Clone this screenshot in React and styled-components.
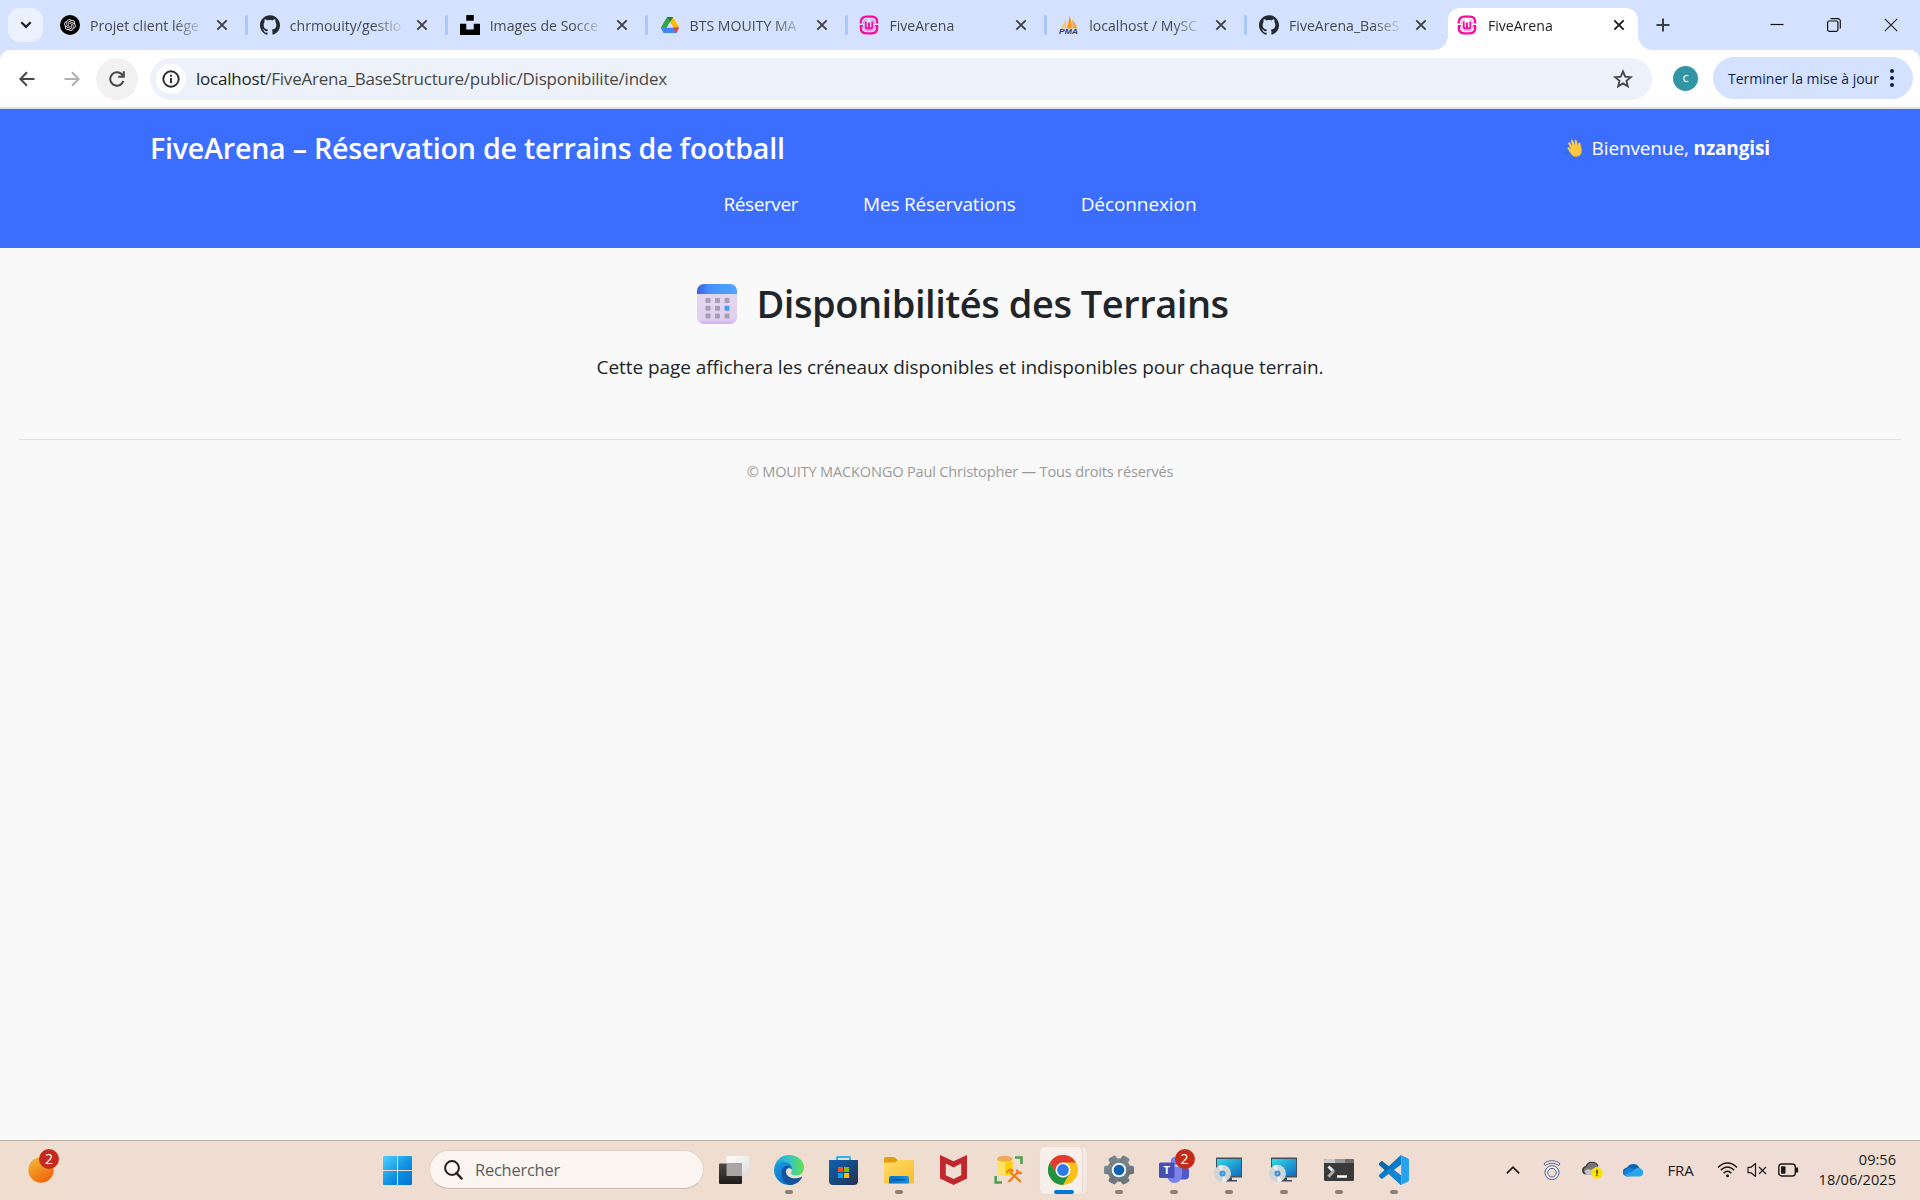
import React from 'react';
import styled, { createGlobalStyle } from 'styled-components';
import { SiGithub, SiUnsplash } from 'react-icons/si';
import { RiOpenaiFill } from 'react-icons/ri';

const GlobalStyle = createGlobalStyle`
  * { box-sizing: border-box; }
  body { margin: 0; font-family: "Open Sans", "Noto Sans", sans-serif; }
  svg { display: block; flex: none; }
`;

const Screen = styled.div`
  width: 1920px;
  height: 1200px;
  display: flex;
  flex-direction: column;
  overflow: hidden;
  background: #f9f9f9;
`;

/* ---------- browser tabs ---------- */
const TabStrip = styled.div`
  height: 50px;
  flex: none;
  display: flex;
  background: #d5e2ff;
`;
const TabSearch = styled.div`
  width: 35px;
  height: 34px;
  margin: 8px 4px 0 8px;
  border-radius: 12px;
  background: #ebf1ff;
  display: flex;
  align-items: center;
  justify-content: center;
`;
const Tab = styled.div`
  position: relative;
  flex: none;
  width: ${p => (p.$active ? 190 : 199.85)}px;
  height: ${p => (p.$active ? 42 : 50)}px;
  margin: ${p => (p.$active ? '8px 0 0 2px' : '0')};
  padding: ${p => (p.$active ? '0 0 8px 9px' : '0 0 0 13px')};
  border-radius: 12px 12px 0 0;
  background: ${p => (p.$active ? '#fff' : 'transparent')};
  display: flex;
  align-items: center;
  &::before, &::after {
    content: ${p => (p.$active ? '""' : 'none')};
    position: absolute;
    bottom: 0;
    width: 14px;
    height: 14px;
  }
  &::before { left: -14px; background: radial-gradient(circle at 0 0, transparent 13.5px, #fff 14px); }
  &::after { right: -14px; background: radial-gradient(circle at 100% 0, transparent 13.5px, #fff 14px); }
`;
const TabTitle = styled.span`
  flex: none;
  width: ${p => (p.$active ? 111 : 112)}px;
  margin: 1px 10px 0 ${p => (p.$active ? 11 : 10)}px;
  font-size: 14.1px;
  line-height: 22px;
  color: ${p => (p.$active ? '#1f1f1f' : '#46484d')};
  white-space: nowrap;
  mask-image: linear-gradient(90deg, #000 84px, transparent 115px);
`;
const TabClose = styled.span`
  width: 20px;
  flex: none;
  display: flex;
  justify-content: center;
`;
const Separator = styled.i`
  flex: none;
  width: 3px;
  height: 20px;
  margin: 0 -3px 0 13px;
  border-radius: 2px;
  background: #a8c7fa;
`;
const NewTab = styled.div`
  width: 51px;
  display: flex;
  align-items: center;
  justify-content: center;
`;
const WindowButtons = styled.div`
  margin-left: auto;
  display: flex;
  align-items: center;
  gap: 43px;
  padding-right: 22px;
`;

/* ---------- browser toolbar ---------- */
const ToolbarBack = styled.div`
  flex: none;
  background: #d5e2ff;
`;
const Toolbar = styled.div`
  height: 57px;
  padding: 0 7px 0 6px;
  border-radius: 10px 10px 0 0;
  background: #fff;
  display: flex;
  align-items: center;
`;
const NavButton = styled.span`
  width: 42px;
  height: 42px;
  margin-right: 3px;
  border-radius: 50%;
  background: ${p => (p.$hover ? '#f1f1f1' : 'transparent')};
  display: flex;
  align-items: center;
  justify-content: center;
`;
const AddressBar = styled.div`
  width: 1502px;
  height: 42px;
  margin-left: 9px;
  padding: 0 19px 0 6px;
  border-radius: 21px;
  background: #edf1fa;
  display: flex;
  align-items: center;
`;
const SiteInfo = styled.span`
  width: 30px;
  height: 30px;
  border-radius: 50%;
  background: #fff;
  display: flex;
  align-items: center;
  justify-content: center;
`;
const Url = styled.span`
  margin: 1px auto 0 10px;
  font-size: 17px;
  line-height: 24px;
  letter-spacing: -0.22px;
  color: #474747;
  b { font-weight: 400; color: #1f1f1f; }
`;
const Avatar = styled.span`
  width: 25px;
  height: 25px;
  margin-left: 21px;
  border-radius: 50%;
  background: #3295a6;
  color: #fff;
  font-size: 13px;
  line-height: 23px;
  text-align: center;
`;
const UpdateChip = styled.div`
  width: 200px;
  height: 42px;
  margin: 0 0 1px 15px;
  padding: 0 19px 0 15px;
  border-radius: 21px;
  background: #d5e2ff;
  color: #0b1d4e;
  font-size: 14px;
  white-space: nowrap;
  display: flex;
  align-items: center;
  justify-content: space-between;
`;
const ToolbarEdge = styled.div`
  height: 2px;
  flex: none;
  background: #dfe1e4;
`;

/* ---------- site ---------- */
const Header = styled.header`
  height: 139px;
  flex: none;
  padding: 19px 150px 0;
  background: #3b6dff;
  color: #fff;
`;
const HeaderRow = styled.div`
  height: 40px;
  display: flex;
  align-items: center;
  justify-content: space-between;
  white-space: nowrap;
`;
const SiteTitle = styled.h1`
  margin: 0;
  font-size: 28.6px;
  line-height: 40px;
  font-weight: 600;
  letter-spacing: -0.22px;
`;
const Welcome = styled.div`
  display: flex;
  align-items: center;
  gap: 9px;
  font-size: 19px;
  line-height: 30px;
  letter-spacing: -0.13px;
`;
const SiteNav = styled.nav`
  margin-top: 21px;
  display: flex;
  justify-content: center;
  gap: 65px;
`;
const NavLink = styled.span`
  font-size: 19px;
  line-height: 30px;
  letter-spacing: ${p => p.$spacing}px;
`;
const Main = styled.main`
  flex: 1;
  padding: 31px 19px 0;
  display: flex;
  flex-direction: column;
`;
const PageTitle = styled.h2`
  margin: 0;
  padding-left: 6px;
  display: flex;
  justify-content: center;
  align-items: center;
  gap: 19px;
  font-size: 38px;
  line-height: 48px;
  font-weight: 600;
  letter-spacing: -0.46px;
  color: #212529;
  svg { margin-top: 2px; }
`;
const Lead = styled.p`
  margin: 25px 0 57px;
  text-align: center;
  font-size: 19px;
  line-height: 30px;
  letter-spacing: -0.07px;
  color: #212529;
`;
const Footer = styled.footer`
  border-top: 1px solid #dee0e2;
  padding-top: 19px;
  text-align: center;
  font-size: 14.6px;
  line-height: 24px;
  letter-spacing: -0.19px;
  color: #999;
`;

/* ---------- taskbar ---------- */
const Taskbar = styled.div`
  height: 60px;
  flex: none;
  border-top: 1px solid #bfafa6;
  background: linear-gradient(90deg, #efddd0, #efddd4 15%, #efddd0 35%, #f0ddd2 70%, #efdcd5 90%, #efddd3);
  display: flex;
  align-items: center;
`;
const Badged = styled.div`
  position: relative;
  width: ${p => p.$w || 30}px;
  height: 30px;
  display: flex;
  align-items: center;
  justify-content: center;
`;
const Badge = styled.span`
  position: absolute;
  top: -6px;
  right: -6px;
  width: 20px;
  height: 20px;
  border-radius: 50%;
  background: #c42b1c;
  color: #fff;
  font-size: 14px;
  line-height: 20px;
  text-align: center;
`;
const Widgets = styled.div`
  width: 383px;
  padding: 0 0 1px 28px;
  & ${Badge} { right: -5px; }
`;
const SearchBox = styled.div`
  width: 275px;
  height: 39px;
  margin: 0 0 2px 17px;
  padding-left: 14px;
  border: 1px solid #e3d2c8;
  border-bottom-color: #c9b8ae;
  border-radius: 20px;
  background: #faf5f1;
  color: #5f5c5a;
  font-size: 16.4px;
  letter-spacing: -0.2px;
  display: flex;
  align-items: center;
  gap: 12px;
`;
const Apps = styled.div`
  display: flex;
  margin-left: 2px;
`;
const AppSlot = styled.div`
  position: relative;
  width: 55px;
  height: 59px;
  padding-bottom: 1px;
  display: flex;
  align-items: center;
  justify-content: center;
  &::after {
    content: ${p => (p.$state ? '""' : 'none')};
    position: absolute;
    bottom: 6px;
    left: 50%;
    width: ${p => (p.$state === 'active' ? 20 : 8)}px;
    height: 4px;
    transform: translateX(-50%);
    border-radius: 2px;
    background: ${p => (p.$state === 'active' ? '#0078d7' : '#8b7f78')};
  }
`;
const ActivePlate = styled.div`
  width: 49px;
  height: 49px;
  border: 1px solid #e8dad1;
  border-radius: 6px;
  background: #f8efea;
  box-shadow: inset -5px 0 0 -1px #f4e8e1, inset -6px 0 0 -1px #e6d8cf;
  display: flex;
  align-items: center;
  padding-left: 8px;
`;
const Tray = styled.div`
  margin-left: auto;
  padding: 0 24px 2px 0;
  display: flex;
  align-items: center;
  color: #1b1a19;
`;
const TrayItem = styled.span`
  width: ${p => p.$w}px;
  display: flex;
  justify-content: center;
  font-size: 15px;
  letter-spacing: -0.2px;
`;
const Clock = styled.div`
  width: 87px;
  margin-bottom: 2px;
  text-align: right;
  font-size: 14.6px;
  line-height: 20px;
`;

/* ---------- icons ---------- */
const Cross = ({ color = '#3c3f44' }) => (
  <svg width="12" height="12" viewBox="0 0 12 12" stroke={color} strokeWidth="1.9" fill="none"><path d="M1.3 1.3l9.4 9.4M10.7 1.3l-9.4 9.4" /></svg>
);
const OpenAi = () => (
  <svg width="20" height="20" viewBox="0 0 20 20"><circle cx="10" cy="10" r="10" /><RiOpenaiFill x="3" y="3" size="14" color="#fff" /></svg>
);
const Drive = () => (
  <svg width="20" height="20" viewBox="0 0 20 20">
    <path d="M7 2h6L6.300 13.800 4 17.500.9 12.600z" fill="#34a350" />
    <path d="M7 2h6l6.200 10.600h-6z" fill="#fbbc04" />
    <path d="M7 2h6l-3 5.200z" fill="#188038" />
    <path d="M6.600 12.600h12.500L16.500 18h-13L.9 12.600z" fill="#4285f4" />
    <path d="M13.300 12.600h5.800L16 18z" fill="#ea4335" />
    <path d="M10 7.200l3.200 5.400H6.800z" fill="#d5e2ff" />
  </svg>
);
const Wamp = () => (
  <svg width="20" height="20" viewBox="0 0 20 20" fill="none" stroke="#f70a9f">
    <path d="M1.800 8.600V7.200C1.800 3.800 4 1.700 7.200 1.700h5.600c3.200 0 5.400 2.100 5.400 5.500v1.400M1.800 10.800v2c0 3.400 2.200 5.500 5.400 5.500h5.600c3.200 0 5.400-2.100 5.400-5.500v-2" strokeWidth="2.300" />
    <path d="M1 10.700h3M16 10.700h3" strokeWidth="1.600" />
    <path d="M4.500 8.800c0-2.800 1-4.200 3.400-4.300M15.500 8.800c0-2.800-1-4.200-3.400-4.300M4.500 11c0 3 1.200 4.500 4 4.500h3c2.800 0 4-1.500 4-4.500" strokeWidth=".8" opacity=".55" />
    <path d="M6.700 6.600v5c0 2.600 3.300 2.600 3.300 0V7.600M10 11.600c0 2.600 3.300 2.600 3.300 0v-5" strokeWidth="1.900" />
  </svg>
);
const PmaText = styled.text`
  font: italic 700 7.500px "Liberation Sans", sans-serif;
  fill: #33386b;
`;
const Pma = () => (
  <svg width="20" height="20" viewBox="0 0 20 20">
    <path d="M1.500 13.500C4 10 6 6 6.500 3.500c1 3 1 6.500.5 10z" fill="#fbc575" />
    <path d="M7.500 13.500C9 9.500 10 5 10.500.5c1.500 4 2.500 9 2 13z" fill="#f8981d" />
    <path d="M13.300 13.500c.5-3.500.2-6-.3-9 2.500 2.500 4.500 6 5.300 9z" fill="#f7a63c" />
    <PmaText x="0" y="19.400" textLength="19" lengthAdjust="spacingAndGlyphs">PMA</PmaText>
  </svg>
);
const Wave = () => (
  <svg width="19" height="22" viewBox="0 0 19 22">
    <g transform="rotate(-14 10 12)">
      <path d="M4 10.500C3.500 9 5 8.300 5.700 9.500L7 12 5.800 5.500C5.500 4 7.300 3.600 7.800 5l1.300 4.300L9 3.700c0-1.500 2-1.600 2.200-.1l.7 5.300.8-4.500c.3-1.400 2-1.200 2 .3l-.1 5.600 1-2.500c.5-1.200 2-.8 1.900.5-.3 3.500.2 5.200-.8 8.200-.8 2.500-3 4-5.600 3.600-3-.4-4.500-2.200-5.400-4.600z" fill="#ffc83d" />
      <path d="M7.500 8l1.500 5h6V9l-1 1-2-1.500-1 1-2-.5z" fill="#ffc83d" />
      <path d="M6 16.500c1.500 3 5 3.700 8.300 2.300-2 2.200-6.800 1.700-8.300-2.300z" fill="#f59b2b" />
    </g>
    <path d="M2.500 13.500c.2 2 .8 3.200 2 4.300M.7 15c.2 1.500.9 2.600 1.800 3.500M13 1.500c1.500.2 2.200 1 2.700 2" stroke="#1c76c4" strokeWidth=".9" fill="none" />
  </svg>
);
const Calendar = () => (
  <svg width="40" height="40" viewBox="0 0 40 40">
    <defs>
      <linearGradient id="calTop"><stop offset="0" stopColor="#3a5fe0" /><stop offset=".3" stopColor="#4690fa" /><stop offset="1" stopColor="#52a6ff" /></linearGradient>
      <linearGradient id="calBody" x2="0" y2="1"><stop offset=".5" stopColor="#e2d5ee" /><stop offset=".88" stopColor="#e0d0f0" /><stop offset="1" stopColor="#cfa9f5" /></linearGradient>
    </defs>
    <rect width="40" height="40" rx="7" fill="url(#calBody)" />
    <path d="M0 10V7a7 7 0 017-7h26a7 7 0 017 7v3z" fill="url(#calTop)" />
    {[14, 21.700, 29.400].map(y => [8.500, 18, 27.500].map(x => (
      <rect key={x + '-' + y} x={x} y={y} width="5" height="5" rx="1" fill={x > 27 && y > 21 && y < 22 ? '#4a9cf8' : '#a79db5'} />
    )))}
  </svg>
);
const WindowsLogo = () => (
  <svg width="29" height="29" viewBox="0 0 29 29">
    <defs><linearGradient id="win" x2="1" y2="1"><stop offset="0" stopColor="#4fd2ff" /><stop offset=".55" stopColor="#0f90e2" /><stop offset="1" stopColor="#0073d2" /></linearGradient></defs>
    <path d="M1 0h13v14H0V1a1 1 0 011-1zM15 0h13a1 1 0 011 1v13H15zM0 15h14v14H1a1 1 0 01-1-1zM15 15h14v13a1 1 0 01-1 1H15z" fill="url(#win)" />
  </svg>
);
const Weather = () => (
  <svg width="26" height="26" viewBox="0 0 26 26">
    <defs><linearGradient id="sun" x1=".2" y1=".1" x2=".7" y2=".9"><stop offset="0" stopColor="#f0b135" /><stop offset="1" stopColor="#f2690d" /></linearGradient></defs>
    <circle cx="13" cy="13" r="12.700" fill="url(#sun)" />
  </svg>
);
const TaskView = () => (
  <svg width="30" height="28" viewBox="0 0 30 28">
    <defs>
      <linearGradient id="tvd" x2="0" y2="1"><stop offset="0" stopColor="#4b4a48" /><stop offset="1" stopColor="#1d1c1b" /></linearGradient>
      <linearGradient id="tvl" x2="1" y2="1"><stop offset="0" stopColor="#fff" /><stop offset="1" stopColor="#dedddc" /></linearGradient>
    </defs>
    <rect x="7.500" y="0" width="22.500" height="20" rx="1" fill="url(#tvl)" />
    <rect y="7.500" width="23" height="20.500" rx="1" fill="url(#tvd)" />
    <path d="M7.500 7.500H23V20H7.500z" fill="#a9a7a5" />
  </svg>
);
const Edge = () => (
  <svg width="30" height="30" viewBox="0 0 30 30">
    <defs>
      <linearGradient id="ed1"><stop offset="0" stopColor="#1ea0dd" /><stop offset=".45" stopColor="#32c2cf" /><stop offset="1" stopColor="#66e04b" /></linearGradient>
      <linearGradient id="ed2" x2=".5" y2="1"><stop offset="0" stopColor="#1b9de0" /><stop offset="1" stopColor="#0a6fd0" /></linearGradient>
    </defs>
    <path d="M.5 12C2 4.500 8 0 15 0c8.500 0 15 5.500 15 12.500 0 5-3.500 8-8 8-3 0-5-1-5-2.200 0-1 1-1.500 1-3.300 0-3-3-5.500-7-5.500-5 0-8.500 1.500-10.500 2.500z" fill="url(#ed1)" />
    <path d="M0 15C0 9.500 5 7 10 7c5.500 0 8.500 3.500 8 8-2-3-6.500-2-6.500 2.500 0 5 3.500 9.500 8.500 11.500A15 15 0 010 15z" fill="url(#ed2)" />
    <path d="M8 14.500C9.500 11 14 9.500 17 12.300c-3-.8-5 1.700-5 4.200 0 4.500 4.500 7 9 6.800 3 0 5-.8 6-1.300 1-.4 1.300.2.8 1C25 27.500 20.500 30 15.500 30 9.500 28 6 20 8 14.500z" fill="#12549f" />
  </svg>
);
const Store = () => (
  <svg width="29" height="29" viewBox="0 0 29 29">
    <defs><linearGradient id="st" x2="1" y2="1"><stop offset="0" stopColor="#0a64b4" /><stop offset="1" stopColor="#252f50" /></linearGradient></defs>
    <path d="M8 5V1.500Q8 1 8.500 1h12q.5 0 .5.500V5" fill="none" stroke="#29b5f2" strokeWidth="2" />
    <path d="M0 4h29v21a4 4 0 01-4 4H4a4 4 0 01-4-4z" fill="url(#st)" />
    <path d="M9 11h5v5H9z" fill="#f25022" /><path d="M15 11h5v5h-5z" fill="#7fba00" />
    <path d="M9 17h5v5H9z" fill="#00a4ef" /><path d="M15 17h5v5h-5z" fill="#ffb900" />
  </svg>
);
const Folder = () => (
  <svg width="30" height="27" viewBox="0 0 30 27">
    <defs>
      <linearGradient id="fo" x2="1" y2="1"><stop offset="0" stopColor="#ffdb6c" /><stop offset="1" stopColor="#fdbd27" /></linearGradient>
      <linearGradient id="fb"><stop offset="0" stopColor="#0a6fc4" /><stop offset="1" stopColor="#1a90dd" /></linearGradient>
    </defs>
    <path d="M0 1.500Q0 0 1.500 0h8q1 0 2 1l2 2H29q1 0 1 1v5H0z" fill="#dfa00d" />
    <path d="M0 5.500h11L14 3h15q1 0 1 1v21.500q0 1-1 1H1q-1 0-1-1z" fill="url(#fo)" />
    <path d="M5 26.500V21q0-2 2-2h16q2 0 2 2v5.500z" fill="url(#fb)" />
    <path d="M8.500 22.800h13" stroke="#0b4a8a" strokeWidth="1.200" />
  </svg>
);
const McAfee = () => (
  <svg width="27" height="30" viewBox="0 0 27 30"><path d="M0 0l13.500 6.200L27 0v23.500L13.500 30 0 23.500zM5.800 8.500v11.700l7.700 3.800 7.700-3.800V8.500l-7.700 4z" fill="#c0282d" fillRule="evenodd" /></svg>
);
const DbTools = () => (
  <svg width="30" height="30" viewBox="0 0 30 30">
    <path d="M3 4v13.500c0 4 15.500 4 15.500 0V4z" fill="#ffe366" /><path d="M11 6.500h7.500v11c0 1.500-3.500 2.700-7.500 2.900z" fill="#fdcf05" />
    <ellipse cx="10.800" cy="3.800" rx="7.800" ry="3" fill="#efab52" />
    <path d="M21 2.500h6.500V9M1.700 21v6.500H8" fill="none" stroke="#4ca153" strokeWidth="2.600" />
    <path d="M14.500 27L25 16M16 17l11 10M12.500 17.500l3.500-3 3.500 1.500M23 14.500c0 3 2 4.500 5 3" fill="none" stroke="#f07d18" strokeWidth="2.300" />
  </svg>
);
const Chrome = () => (
  <svg width="30" height="30" viewBox="0 0 30 30">
    <circle cx="15" cy="15" r="15" fill="#fbc116" />
    <path d="M2 7.500a15 15 0 0126 0H15L8.500 18.800z" fill="#e33b2e" />
    <path d="M2 7.500A15 15 0 0015 30l6.500-11.300L8.500 18.800z" fill="#229342" />
    <circle cx="15" cy="15" r="7.500" fill="#fff" /><circle cx="15" cy="15" r="5.900" fill="#2f7be8" />
  </svg>
);
const Gear = () => (
  <svg width="30" height="30" viewBox="0 0 30 30">
    <defs><linearGradient id="ge" gradientUnits="userSpaceOnUse" x1="0" y1="0" x2="12" y2="30"><stop offset="0" stopColor="#8c969e" /><stop offset="1" stopColor="#616b73" /></linearGradient></defs>
    <g fill="url(#ge)"><circle cx="15" cy="15" r="11.700" />{[0, 60, 120].map(a => <rect key={a} x="0" y="10.800" width="30" height="8.400" rx="2" transform={`rotate(${a} 15 15)`} />)}</g>
    <circle cx="15" cy="15" r="7.300" fill="#f4f4f4" /><circle cx="15" cy="15" r="5.300" fill="#0b63b4" />
  </svg>
);
const TeamsLetter = styled.text`
  font: 700 11px "Open Sans", sans-serif;
  fill: #fff;
`;
const Teams = () => (
  <svg width="30" height="30" viewBox="0 0 30 30">
    <circle cx="25" cy="7.500" r="3" fill="#5059c9" /><rect x="19" y="11.500" width="11" height="13" rx="4" fill="#5059c9" />
    <circle cx="16" cy="6" r="4.300" fill="#7b83eb" /><path d="M8 11.500h15V20a7.500 8 0 01-15 0z" fill="#7b83eb" />
    <rect y="7.500" width="15.500" height="15.500" rx="1.500" fill="#4450b5" />
    <TeamsLetter x="4.400" y="19.200">T</TeamsLetter>
  </svg>
);
const DiscPc = () => (
  <svg width="30" height="28" viewBox="0 0 30 28">
    <defs><linearGradient id="pc" x2="1" y2="1"><stop offset="0" stopColor="#33dbe6" /><stop offset="1" stopColor="#1269c2" /></linearGradient></defs>
    <path d="M2 1.500h26v20H2z" fill="#43505e" /><path d="M3 3h24v17H3z" fill="url(#pc)" />
    <path d="M14 21.500h4V24h5v1.500H12z" fill="#3d4854" />
    <circle cx="8.500" cy="17.500" r="8.500" fill="#cfd5d8" /><path d="M8.500 17.500L4 10.300A8.500 8.500 0 018.500 9zM8.500 17.500l4.500 7.200A8.500 8.500 0 018.500 26z" fill="#eceff0" />
    <circle cx="8.500" cy="17.500" r="3" fill="#3f93d3" /><circle cx="8.500" cy="17.500" r="1.200" fill="#7ab8e6" />
  </svg>
);
const Terminal = () => (
  <svg width="30" height="22" viewBox="0 0 30 22">
    <rect width="30" height="22" rx="1.500" fill="#3a3a3a" /><path d="M0 4V1.500Q0 0 1.500 0H11v4z" fill="#c9c9c9" /><path d="M11 0h10v4H11z" fill="#999" /><path d="M21 0h7.500Q30 0 30 1.500V4h-9z" fill="#6c6c6c" />
    <path d="M4.500 7.500l5 5" stroke="#eee" strokeWidth="3" /><path d="M9.800 11.800l-5.300 6" stroke="#aaa" strokeWidth="3" /><path d="M13 17.500h10" stroke="#fff" strokeWidth="2.500" />
  </svg>
);
const VsCode = () => (
  <svg width="30" height="30" viewBox="0 0 30 30">
    <path d="M22 0L0 20c-.4.600-.3 1.200 0 1.600l2 2c.500.400 1.200.400 1.700 0L22 9.500z" fill="#0a7bc9" />
    <path d="M22 30L0 10c-.4-.6-.3-1.200 0-1.600l2-2c.500-.4 1.200-.4 1.700 0L22 20.500z" fill="#0868ad" />
    <path d="M22 30L7.500 16.700 11.500 13 22 20.500z" fill="#0f86d6" />
    <path d="M21.700 0l7 3.200q1.300.6 1.300 2v19.600q0 1.400-1.300 2l-7 3.200c.3-.4.500-1 .5-1.500v-27c0-.5-.2-1-.5-1.500z" fill="#26a2ef" />
  </svg>
);

const tabs = [
  { icon: <OpenAi />, title: 'Projet client lége' },
  { icon: <SiGithub size={20} color="#24292f" />, title: 'chrmouity/gestio' },
  { icon: <SiUnsplash size={20} color="#000" />, title: 'Images de Socce' },
  { icon: <Drive />, title: 'BTS MOUITY MA' },
  { icon: <Wamp />, title: 'FiveArena' },
  { icon: <Pma />, title: 'localhost / MySC' },
  { icon: <SiGithub size={20} color="#24292f" />, title: 'FiveArena_BaseS' },
];

const apps = [
  { icon: <TaskView /> },
  { icon: <Edge />, state: 'open' },
  { icon: <Store /> },
  { icon: <Folder />, state: 'open' },
  { icon: <McAfee /> },
  { icon: <DbTools /> },
  { icon: <ActivePlate><Chrome /></ActivePlate>, state: 'active' },
  { icon: <Gear />, state: 'open' },
  { icon: <Badged><Teams /><Badge>2</Badge></Badged>, state: 'open' },
  { icon: <DiscPc />, state: 'open' },
  { icon: <DiscPc />, state: 'open' },
  { icon: <Terminal />, state: 'open' },
  { icon: <VsCode />, state: 'open' },
];

const BrowserTabs = () => (
  <TabStrip>
    <TabSearch><svg width="12" height="8" viewBox="0 0 12 8" fill="none" stroke="#1f1f1f" strokeWidth="2.200"><path d="M1.300 1.200L6 5.900l4.700-4.700" /></svg></TabSearch>
    {tabs.map((t, i) => (
      <Tab key={i}>{t.icon}<TabTitle>{t.title}</TabTitle><TabClose><Cross /></TabClose>{i < 6 && <Separator />}</Tab>
    ))}
    <Tab $active><Wamp /><TabTitle $active>FiveArena</TabTitle><TabClose><Cross color="#1f1f1f" /></TabClose></Tab>
    <NewTab><svg width="14" height="14" viewBox="0 0 14 14" stroke="#3c3f44" strokeWidth="2"><path d="M7 .5v13M.5 7h13" /></svg></NewTab>
    <WindowButtons>
      <svg width="14" height="14" viewBox="0 0 14 14"><path d="M.5 6.500h13" stroke="#111" strokeWidth="1.200" /></svg>
      <svg width="14" height="14" viewBox="0 0 14 14" fill="none" stroke="#111" strokeWidth="1.200"><rect x=".6" y="3" width="10.300" height="10.300" rx="1.500" /><path d="M3.500.7h7.300a2.500 2.500 0 012.500 2.500v7.300" /></svg>
      <svg width="14" height="14" viewBox="0 0 14 14" stroke="#222" strokeWidth="1.200"><path d="M.8.800l12.400 12.400M13.200.800L.8 13.200" /></svg>
    </WindowButtons>
  </TabStrip>
);

const BrowserToolbar = () => (
  <ToolbarBack>
    <Toolbar>
      <NavButton><svg width="16" height="16" viewBox="0 0 16 16" fill="none" stroke="#474747" strokeWidth="2"><path d="M15.500 8H2M8 1.200L1.400 8 8 14.800" /></svg></NavButton>
      <NavButton><svg width="16" height="16" viewBox="0 0 16 16" fill="none" stroke="#b0b0b0" strokeWidth="2"><path d="M.5 8H14M8 1.200L14.600 8 8 14.800" /></svg></NavButton>
      <NavButton $hover><svg width="16" height="16" viewBox="0 0 16 16" fill="none" stroke="#474747" strokeWidth="2"><path d="M14.300 10A6.700 6.700 0 118 1.300c2.600 0 4.500 1.200 6.200 3.700M14.800.3v5.400H9.300" /></svg></NavButton>
      <AddressBar>
        <SiteInfo><svg width="18" height="18" viewBox="0 0 18 18" fill="none" stroke="#2a2b2e" strokeWidth="1.900"><circle cx="9" cy="9" r="7.700" /><path d="M9 8v5.200M9 4.800v2" /></svg></SiteInfo>
        <Url><b>localhost</b>/FiveArena_BaseStructure/public/Disponibilite/index</Url>
        <svg width="20" height="20" viewBox="0 0 20 20" fill="none" stroke="#474747" strokeWidth="1.800"><path d="M10 2.400l2.200 5.200 5.600.5-4.300 3.700 1.300 5.500-4.800-2.900-4.800 2.900 1.300-5.500L2.200 8.100l5.600-.5z" /></svg>
      </AddressBar>
      <Avatar>c</Avatar>
      <UpdateChip>
        Terminer la mise à jour
        <svg width="4" height="18" viewBox="0 0 4 18" fill="#0b1d4e"><circle cx="2" cy="2" r="2" /><circle cx="2" cy="9" r="2" /><circle cx="2" cy="16" r="2" /></svg>
      </UpdateChip>
    </Toolbar>
  </ToolbarBack>
);

const SystemTaskbar = () => (
  <Taskbar>
    <Widgets><Badged $w={26}><Weather /><Badge>2</Badge></Badged></Widgets>
    <WindowsLogo />
    <SearchBox>
      <svg width="19" height="20" viewBox="0 0 19 20" fill="none" stroke="#202020" strokeWidth="2"><circle cx="8" cy="8" r="6.900" /><path d="M12.500 13l5 5.500" strokeWidth="2.500" strokeLinecap="round" /></svg>
      Rechercher
    </SearchBox>
    <Apps>{apps.map((a, i) => <AppSlot key={i} $state={a.state}>{a.icon}</AppSlot>)}</Apps>
    <Tray>
      <TrayItem $w={39}><svg width="14" height="8" viewBox="0 0 14 8" fill="none" stroke="#1b1a19" strokeWidth="1.700"><path d="M.8 7.300L7 1.200l6.200 6.100" /></svg></TrayItem>
      <TrayItem $w={40}>
        <svg width="18" height="20" viewBox="0 0 18 20" fill="none" stroke="#4f5f87" strokeWidth="1"><circle cx="9" cy="12.700" r="7" fill="#eef1f7" /><circle cx="9" cy="12.700" r="4.300" fill="#efddd4" /><path d="M1 3.800C5-.3 13-.3 17 3.800l-1.500 1.700c-3.500-3-9.500-3-13 0z" fill="#eef1f7" /></svg>
      </TrayItem>
      <TrayItem $w={41}>
        <svg width="21" height="18" viewBox="0 0 21 18"><path d="M4 13.500a4 4 0 01-.2-8A6.500 6.500 0 0116 5.500l-5.500 8z" fill="#777" /><path d="M2.500 13c-1-4.500 4-6 6.500-4l6-3.500 2 2-4 6H4z" fill="#c4c4c4" /><path d="M3.500 13a4 4 0 01.5-7.500A6.500 6.500 0 0116 5" fill="none" stroke="#333" strokeWidth="1.200" /><circle cx="15" cy="12" r="5.700" fill="#fbe300" /><path d="M15 8.700v4M15 13.700V15" stroke="#222" strokeWidth="1.400" /></svg>
      </TrayItem>
      <TrayItem $w={41}>
        <svg width="21" height="14" viewBox="0 0 21 14"><path d="M4.500 13.500A4.500 4.500 0 014 4.500 7 7 0 0116.500 5l.5 6z" fill="#0a63b8" /><path d="M1 11a5 5 0 014-6.300c2-.4 3.500.3 5 1.300l4 3z" fill="#1480d6" /><path d="M1.500 11.500L10 8.200c2-3.500 6-4 7.500-2.800A4.300 4.300 0 0117 13.500H4.500q-2 0-3-2z" fill="#2aa5ec" /></svg>
      </TrayItem>
      <TrayItem $w={53}>FRA</TrayItem>
      <TrayItem $w={40}>
        <svg width="21" height="16" viewBox="0 0 21 16" fill="none" stroke="#1b1a19" strokeWidth="1.400"><path d="M1 5.500C6.500-.6 14.500-.6 20 5.500M3.800 8.300c4-4.400 9.400-4.400 13.400 0M6.600 11.200c2.400-2.600 5.400-2.600 7.800 0" /><circle cx="10.500" cy="13.700" r="1.500" fill="#1b1a19" stroke="none" /></svg>
      </TrayItem>
      <TrayItem $w={20}>
        <svg width="20" height="16" viewBox="0 0 20 16" fill="none" stroke="#1b1a19" strokeWidth="1.200"><path d="M1 5.300h3L8.500 1.500v13L4 10.700H1z" strokeLinejoin="round" /><path d="M12 5l7 7M19 5l-7 7" /></svg>
      </TrayItem>
      <TrayItem $w={42}>
        <svg width="21" height="14" viewBox="0 0 21 14" fill="none" stroke="#1b1a19" strokeWidth="1.400"><rect x=".8" y="1" width="16.500" height="12" rx="3" /><rect x="3" y="3.200" width="4.500" height="7.600" rx="1" fill="#1b1a19" stroke="none" /><path d="M19 4.500v5" strokeWidth="2.200" /></svg>
      </TrayItem>
      <Clock>09:56<br />18/06/2025</Clock>
    </Tray>
  </Taskbar>
);

export default function App() {
  return (
    <Screen>
      <GlobalStyle />
      <BrowserTabs />
      <BrowserToolbar />
      <ToolbarEdge />
      <Header>
        <HeaderRow>
          <SiteTitle>FiveArena – Réservation de terrains de football</SiteTitle>
          <Welcome><Wave /><span>Bienvenue, <strong>nzangisi</strong></span></Welcome>
        </HeaderRow>
        <SiteNav>
          <NavLink $spacing={-0.42}>Réserver</NavLink>
          <NavLink $spacing={-0.17}>Mes Réservations</NavLink>
          <NavLink $spacing={-0.09}>Déconnexion</NavLink>
        </SiteNav>
      </Header>
      <Main>
        <PageTitle><Calendar /><span>Disponibilités des Terrains</span></PageTitle>
        <Lead>Cette page affichera les créneaux disponibles et indisponibles pour chaque terrain.</Lead>
        <Footer>© MOUITY MACKONGO Paul Christopher — Tous droits réservés</Footer>
      </Main>
      <SystemTaskbar />
    </Screen>
  );
}
